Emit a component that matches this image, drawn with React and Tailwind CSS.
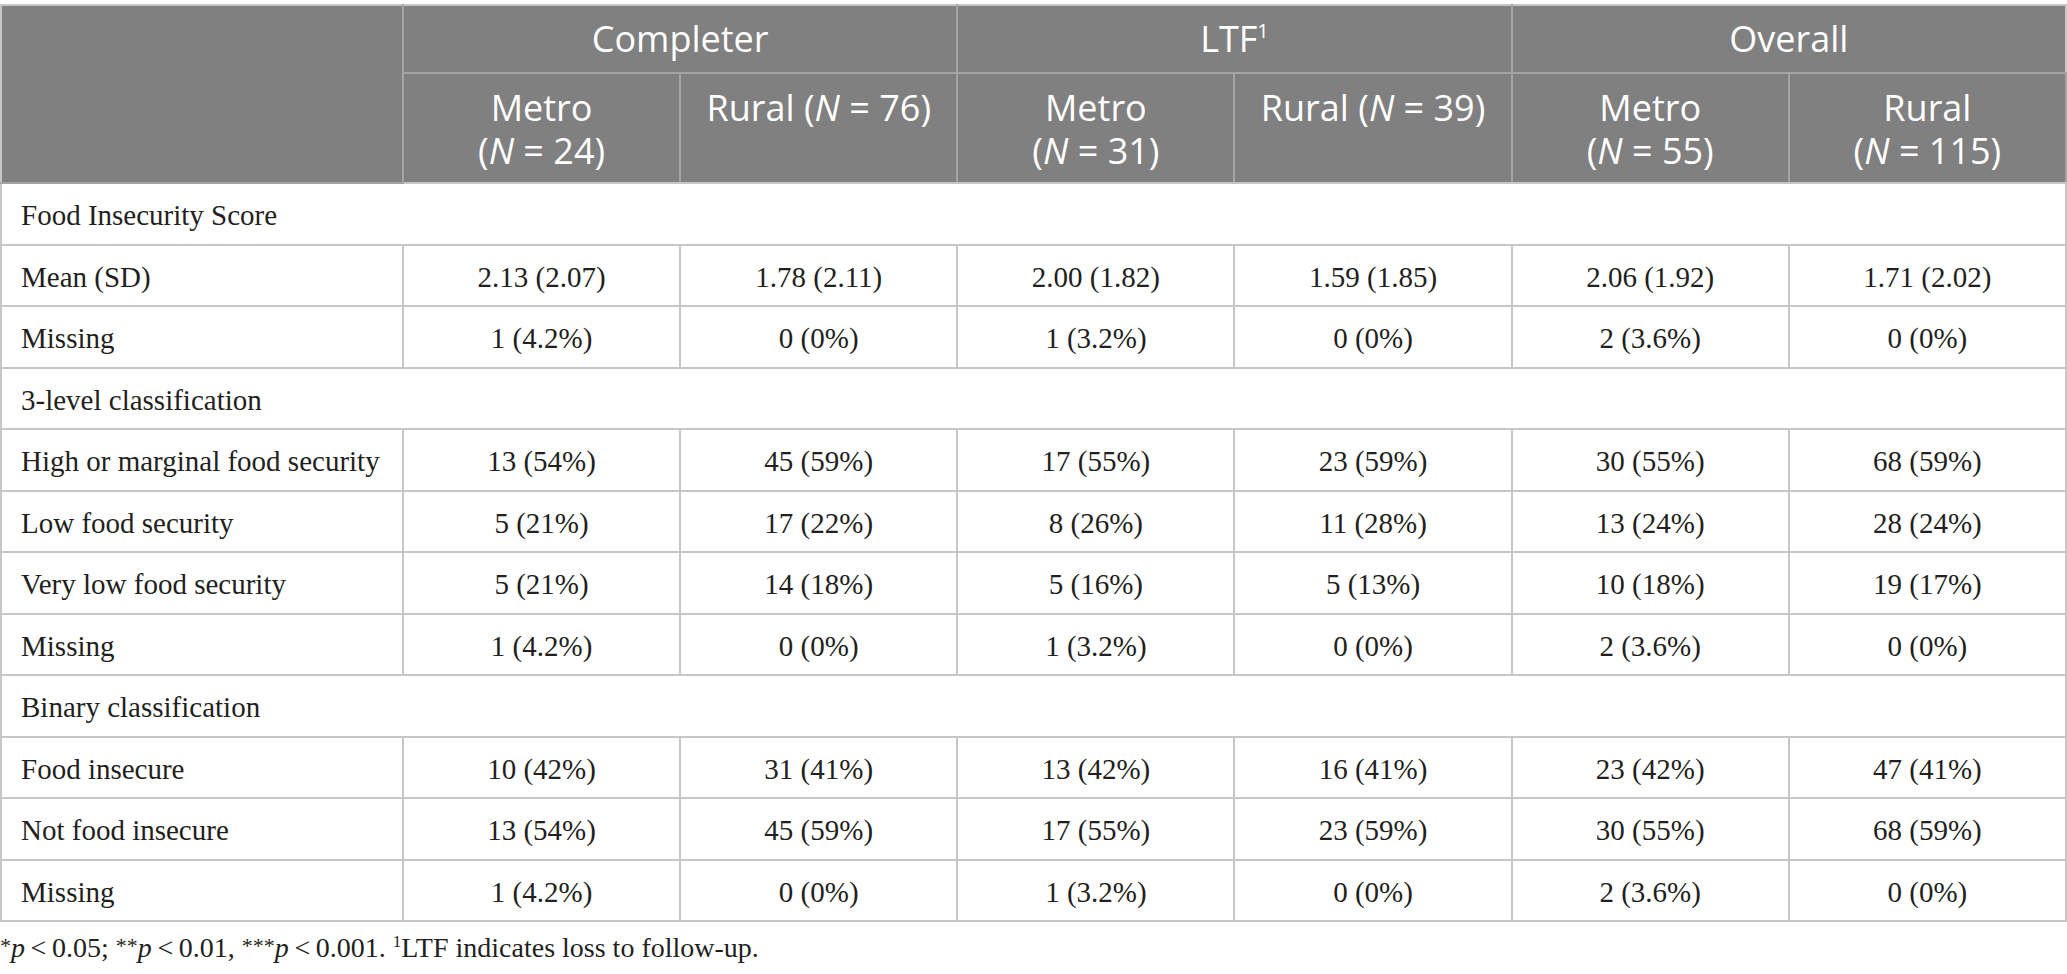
import React from "react";

const groups = [
  {
    title: "Food Insecurity Score",
    rows: [
      ["Mean (SD)", "2.13 (2.07)", "1.78 (2.11)", "2.00 (1.82)", "1.59 (1.85)", "2.06 (1.92)", "1.71 (2.02)"],
      ["Missing", "1 (4.2%)", "0 (0%)", "1 (3.2%)", "0 (0%)", "2 (3.6%)", "0 (0%)"],
    ],
  },
  {
    title: "3-level classification",
    rows: [
      ["High or marginal food security", "13 (54%)", "45 (59%)", "17 (55%)", "23 (59%)", "30 (55%)", "68 (59%)"],
      ["Low food security", "5 (21%)", "17 (22%)", "8 (26%)", "11 (28%)", "13 (24%)", "28 (24%)"],
      ["Very low food security", "5 (21%)", "14 (18%)", "5 (16%)", "5 (13%)", "10 (18%)", "19 (17%)"],
      ["Missing", "1 (4.2%)", "0 (0%)", "1 (3.2%)", "0 (0%)", "2 (3.6%)", "0 (0%)"],
    ],
  },
  {
    title: "Binary classification",
    rows: [
      ["Food insecure", "10 (42%)", "31 (41%)", "13 (42%)", "16 (41%)", "23 (42%)", "47 (41%)"],
      ["Not food insecure", "13 (54%)", "45 (59%)", "17 (55%)", "23 (59%)", "30 (55%)", "68 (59%)"],
      ["Missing", "1 (4.2%)", "0 (0%)", "1 (3.2%)", "0 (0%)", "2 (3.6%)", "0 (0%)"],
    ],
  },
];

const subHeads = [
  { label: "Metro", n: "24", split: true },
  { label: "Rural", n: "76", split: false },
  { label: "Metro", n: "31", split: true },
  { label: "Rural", n: "39", split: false },
  { label: "Metro", n: "55", split: true },
  { label: "Rural", n: "115", split: true },
];

const N = ({ n }) => (
  <>
    (<i>N</i> = {n})
  </>
);

const App = () => {
  return (
    <div className="w-[2067px] bg-white pt-[4px] text-[#231f20]">
      <table className="w-full table-fixed border-collapse border-2 border-[#c6c6c6]">
        <colgroup>
          <col className="w-[402px]" />
          <col />
          <col />
          <col />
          <col />
          <col />
          <col />
        </colgroup>
        <thead className="bg-[#7f807f] text-white font-['Open_Sans',sans-serif] text-[36px]">
          <tr className="h-[68px]">
            <th rowSpan={2} className="border-2 border-[#a3a4a3] border-t-[#c6c6c6] border-l-[#c6c6c6]"></th>
            <th colSpan={2} className="border-2 border-[#a3a4a3] border-t-[#c6c6c6] font-normal align-middle">
              Completer
            </th>
            <th colSpan={2} className="border-2 border-[#a3a4a3] border-t-[#c6c6c6] font-normal align-middle">
              LTF<sup className="text-[20px] -top-[14px]">1</sup>
            </th>
            <th colSpan={2} className="border-2 border-[#a3a4a3] border-t-[#c6c6c6] border-r-[#c6c6c6] font-normal align-middle">
              Overall
            </th>
          </tr>
          <tr className="h-[110px]">
            {subHeads.map((h, i) => (
              <th
                key={i}
                className="border-2 border-[#a3a4a3] border-b-[#c6c6c6] font-normal align-top pt-[12px] leading-[43px]"
              >
                {h.split ? (
                  <>
                    <span className="block">{h.label}</span>
                    <span className="block">
                      <N n={h.n} />
                    </span>
                  </>
                ) : (
                  <>
                    {h.label} <N n={h.n} />
                  </>
                )}
              </th>
            ))}
          </tr>
        </thead>
        <tbody className="font-['Liberation_Serif','Times_New_Roman',serif] text-[29px]">
          {groups.map((g) => (
            <React.Fragment key={g.title}>
              <tr className="h-[61.5px]">
                <td colSpan={7} className="border-2 border-[#c6c6c6] pl-[19px] pt-[4px] align-middle">
                  {g.title}
                </td>
              </tr>
              {g.rows.map((r, ri) => (
                <tr key={ri} className="h-[61.5px]">
                  {r.map((c, ci) => (
                    <td
                      key={ci}
                      className={
                        ci === 0
                          ? "border-2 border-[#c6c6c6] pl-[19px] pt-[4px] align-middle"
                          : "border-2 border-[#c6c6c6] pt-[4px] text-center align-middle"
                      }
                    >
                      {c}
                    </td>
                  ))}
                </tr>
              ))}
            </React.Fragment>
          ))}
        </tbody>
      </table>
      <p className="mt-[9px] font-['Liberation_Serif','Times_New_Roman',serif] text-[28px] leading-[34px]">
        <sup className="text-[22px] -top-[4px]">*</sup>
        <i>p</i>&thinsp;&lt;&thinsp;0.05; <sup className="text-[22px] -top-[4px]">**</sup>
        <i>p</i>&thinsp;&lt;&thinsp;0.01, <sup className="text-[22px] -top-[4px]">***</sup>
        <i>p</i>&thinsp;&lt;&thinsp;0.001. <sup className="text-[17px] -top-[10px]">1</sup>LTF indicates loss to
        follow-up.
      </p>
    </div>
  );
};

export default App;
